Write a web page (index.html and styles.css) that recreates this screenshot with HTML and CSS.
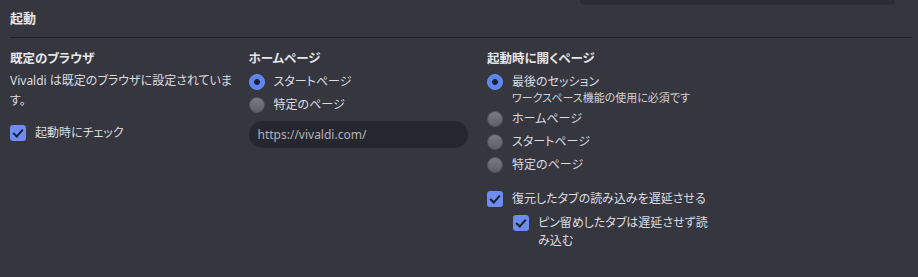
FILE: index.html
```html
<!DOCTYPE html>
<html lang="ja">
<head>
    <meta charset="UTF-8">
    <meta name="viewport" content="width=device-width, initial-scale=1.0">
    <title>設定 - 起動</title>
    <link rel="stylesheet" href="styles.css">
</head>
<body>
    <!-- 前のセクションの入力欄の下端 -->
    <div class="prev-row">
        <div class="prev-field"></div>
    </div>

    <div class="section">
        <h2 class="section-title">起動</h2>

        <div class="columns">
            <div class="col">
                <h3 class="col-title">既定のブラウザ</h3>
                <p class="desc">Vivaldi は既定のブラウザに設定されています。</p>
                <label class="check row-check">
                    <span class="box on"></span>
                    <span class="text">起動時にチェック</span>
                </label>
            </div>

            <div class="col">
                <h3 class="col-title">ホームページ</h3>
                <div class="radios">
                    <label class="radio">
                        <span class="dot on"></span>
                        <span class="text">スタートページ</span>
                    </label>
                    <label class="radio">
                        <span class="dot"></span>
                        <span class="text">特定のページ</span>
                    </label>
                </div>
                <div class="url-field">https://vivaldi.com/</div>
            </div>

            <div class="col">
                <h3 class="col-title">起動時に開くページ</h3>
                <div class="radios">
                    <label class="radio">
                        <span class="dot on"></span>
                        <span class="text">最後のセッション<small class="hint">ワークスペース機能の使用に必須です</small></span>
                    </label>
                    <label class="radio">
                        <span class="dot"></span>
                        <span class="text">ホームページ</span>
                    </label>
                    <label class="radio">
                        <span class="dot"></span>
                        <span class="text">スタートページ</span>
                    </label>
                    <label class="radio">
                        <span class="dot"></span>
                        <span class="text">特定のページ</span>
                    </label>
                </div>
                <label class="check lazy">
                    <span class="box on"></span>
                    <span class="text">復元したタブの読み込みを遅延させる</span>
                </label>
                <label class="check nested">
                    <span class="box on"></span>
                    <span class="text">ピン留めしたタブは遅延させず読み込む</span>
                </label>
            </div>
        </div>
    </div>
</body>
</html>
```

FILE: styles.css
```css
body {
    margin: 0;
    padding: 0;
    background-color: #35363e;
    color: #dcdce2;
    font-family: "Noto Sans", "Noto Sans CJK JP", sans-serif;
    font-size: 12px;
    font-feature-settings: "palt";
}

.prev-row {
    height: 4px;
    padding-left: 580px;
}

.prev-field {
    width: 315px;
    height: 4px;
    background: #2b2c34;
    border-radius: 0 0 10px 10px;
    box-shadow: 0 1px 0 #2f3038;
}

.section {
    padding: 0 6px 0 10px;
}

.section-title {
    margin: 0;
    padding-top: 4px;
    font-size: 13px;
    font-weight: 700;
    line-height: 20px;
    color: #e6e6ec;
    padding-bottom: 9px;
    border-bottom: 1px solid #1f1f26;
}

.columns {
    display: grid;
    grid-template-columns: 226px 226px 226px;
    column-gap: 12.5px;
    padding-top: 11px;
}

.col-title {
    margin: 0;
    font-size: 12.5px;
    font-weight: 700;
    line-height: 20px;
    color: #e6e6ec;
}

.desc {
    margin: 2px 0 0;
    line-height: 20px;
}

.check,
.radio {
    display: flex;
    align-items: flex-start;
    gap: 9px;
    line-height: 18px;
}

.row-check {
    margin-top: 13px;
}

.radios {
    display: flex;
    flex-direction: column;
    gap: 5px;
    margin-top: 4px;
}

.hint {
    display: block;
    font-size: 11px;
    line-height: 14px;
    color: #d2d2d8;
}

.dot {
    flex: none;
    width: 16px;
    height: 16px;
    margin-top: 1px;
    border-radius: 50%;
    box-sizing: border-box;
    background: linear-gradient(#7a7a80, #5f5f65);
    border: 1px solid #55565c;
}

.dot.on {
    background: radial-gradient(circle, #1d2236 0 2.6px, #5b84f2 3.2px);
    border: 1px solid #6d93f7;
}

.box {
    flex: none;
    width: 16px;
    height: 16px;
    margin-top: 1px;
    border-radius: 3px;
    background: #6d8cf2;
    position: relative;
}

.box.on::after {
    content: "";
    position: absolute;
    left: 5px;
    top: 2px;
    width: 4px;
    height: 8px;
    border: solid #1c1f30;
    border-width: 0 2.5px 2.5px 0;
    transform: rotate(42deg);
}

.url-field {
    width: 201px;
    margin-top: 7px;
    height: 27px;
    line-height: 27px;
    padding: 0 9px;
    border-radius: 14px;
    background: #26272e;
    color: #b2b2ba;
}

.lazy {
    margin-top: 16px;
}

.nested {
    margin-top: 6px;
    padding-left: 26px;
}
```
